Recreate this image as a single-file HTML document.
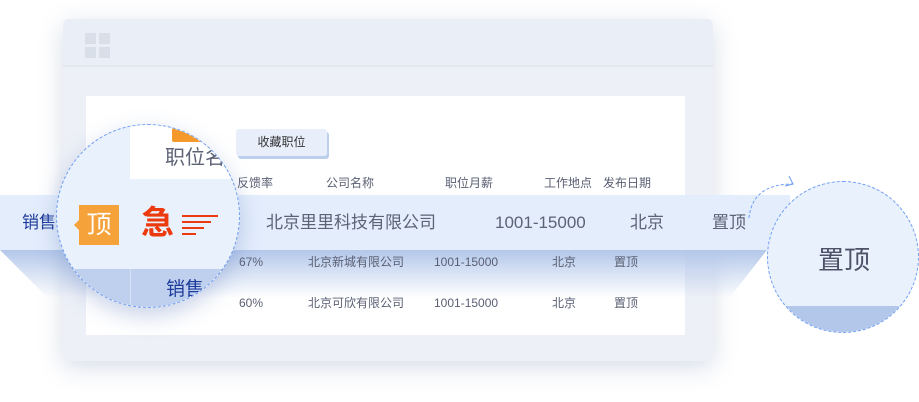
<!DOCTYPE html>
<html><head><meta charset="utf-8"><style>
*{margin:0;padding:0;box-sizing:border-box}
body{width:919px;height:402px;background:#fff;position:relative;overflow:hidden;font-family:"Liberation Sans","Noto Sans CJK SC",sans-serif;color:#5a5f73}
.a{position:absolute}
.win{left:63px;top:19px;width:650px;height:342px;background:#edf0f7;border-radius:6px;box-shadow:0 6px 24px rgba(120,140,180,.3)}
.hdr{left:0;top:0;width:650px;height:48px;background:#eaeff7;border-bottom:2px solid #e1e6ef;border-radius:6px 6px 0 0}
.sq{width:11px;height:11px;background:#d9dfe9}
.t{font-size:12px;line-height:16px;color:#5a5f73;white-space:nowrap}
.b{font-size:17px;line-height:22px;color:#5d6275;white-space:nowrap}
</style></head><body>
<div class="a win">
 <div class="a hdr"><div class="a sq" style="left:22px;top:14px"></div><div class="a sq" style="left:36px;top:14px"></div><div class="a sq" style="left:22px;top:28px"></div><div class="a sq" style="left:36px;top:28px"></div></div>
 <div class="a" style="left:23px;top:77px;width:599px;height:239px;background:#fff"></div>
</div>
<div class="a" style="left:236px;top:129px;width:91px;height:27px;background:#e8effb;border-radius:3px;box-shadow:2px 3px 0 #bcd0ee;font-size:12px;color:#333;text-align:center;line-height:27px">收藏职位</div>
<div class="a t" style="left:237px;top:175px">反馈率</div>
<div class="a t" style="left:326px;top:175px">公司名称</div>
<div class="a t" style="left:445px;top:175px">职位月薪</div>
<div class="a t" style="left:544px;top:175px">工作地点</div>
<div class="a t" style="left:603px;top:175px">发布日期</div>
<div class="a" style="left:0;top:250px;width:713px;height:48px;background:linear-gradient(#b3c7ea,rgba(255,255,255,0));clip-path:polygon(0 0,100% 0,100% 100%,48px 100%)"></div>
<div class="a" style="left:713px;top:250px;width:54px;height:48px;background:linear-gradient(#b3c7ea,rgba(255,255,255,0));clip-path:polygon(0 0,100% 0,30% 100%,0 100%)"></div>
<div class="a t" style="left:239px;top:254px">67%</div>
<div class="a t" style="left:308px;top:254px">北京新城有限公司</div>
<div class="a t" style="left:434px;top:254px">1001-15000</div>
<div class="a t" style="left:552px;top:254px">北京</div>
<div class="a t" style="left:614px;top:254px">置顶</div>
<div class="a t" style="left:239px;top:295px">60%</div>
<div class="a t" style="left:308px;top:295px">北京可欣有限公司</div>
<div class="a t" style="left:434px;top:295px">1001-15000</div>
<div class="a t" style="left:552px;top:295px">北京</div>
<div class="a t" style="left:614px;top:295px">置顶</div>
<div class="a" style="left:0;top:195px;width:790px;height:55px;background:#e3edfc"></div>
<div class="a" style="left:22px;top:212px;font-size:17px;line-height:22px;color:#1d3b9a">销售</div>
<div class="a b" style="left:266px;top:212px">北京里里科技有限公司</div>
<div class="a b" style="left:495px;top:212px">1001-15000</div>
<div class="a b" style="left:630px;top:212px">北京</div>
<div class="a b" style="left:712px;top:212px">置顶</div>
<div class="a" style="left:56px;top:124px;width:184px;height:184px;border-radius:50%;overflow:hidden;border:1px dashed #6d9cf0;background:#e9f1fd;box-shadow:0 8px 22px rgba(100,130,190,.35)">
 <div class="a" style="left:73px;top:-1px;width:110px;height:55px;background:#fff"></div>
 <div class="a" style="left:115px;top:3px;width:38px;height:14px;background:#f59a2a;border-radius:2px"></div>
 <div class="a" style="left:108px;top:20px;font-size:20px;line-height:26px;color:#5d6275">职位名</div>
 <div class="a" style="left:0;top:144px;width:190px;height:50px;background:#bfd0ee"></div>
 <div class="a" style="left:73px;top:144px;width:1px;height:50px;background:#d6e2f5"></div>
 <div class="a" style="left:109px;top:153px;font-size:19px;line-height:24px;color:#1d3b9a">销售</div>
 <div class="a" style="left:22px;top:80px;width:40px;height:40px;background:#f6a23a;color:#fff;font-size:25px;text-align:center;line-height:40px">顶</div>
 <div class="a" style="left:17px;top:94px;width:0;height:0;border-top:6px solid transparent;border-bottom:6px solid transparent;border-right:6px solid #f6a23a"></div>
 <div class="a" style="left:84px;top:78px;font-size:33px;line-height:40px;font-weight:bold;color:#ec3a0e">急</div>
 <div class="a" style="left:125px;top:90px;width:36px;height:2px;background:#ec3a0e"></div>
 <div class="a" style="left:125px;top:96px;width:29px;height:2px;background:#ec3a0e"></div>
 <div class="a" style="left:125px;top:102px;width:22px;height:2px;background:#ec3a0e"></div>
 <div class="a" style="left:125px;top:108px;width:14px;height:2px;background:#ec3a0e"></div>
</div>
<svg class="a" style="left:745px;top:170px" width="60" height="50"><path d="M4 48 C6 28 18 14 48 14" fill="none" stroke="#6d9cf0" stroke-dasharray="3 2"/><path d="M44 6 L48 14 L40 16" fill="none" stroke="#6d9cf0"/></svg>
<div class="a" style="left:767px;top:181px;width:152px;height:152px;border-radius:50%;overflow:hidden;border:1px dashed #6d9cf0;background:#e9f1fd">
 <div class="a" style="left:0;top:124px;width:152px;height:30px;background:#b3c7ea"></div>
 <div class="a" style="left:50px;top:62px;font-size:26px;line-height:32px;color:#4d5268">置顶</div>
</div>
</body></html>
